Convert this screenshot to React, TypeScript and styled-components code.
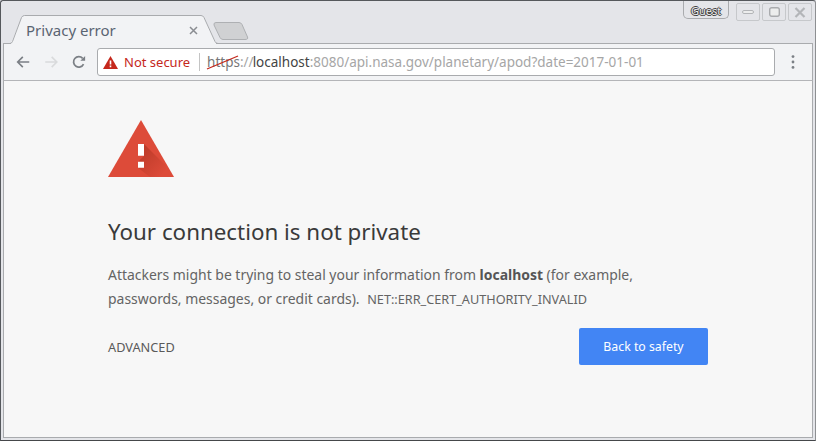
import styled, { createGlobalStyle } from "styled-components";

const uiFont = `"Noto Sans", "Open Sans", sans-serif`;

const GlobalStyle = createGlobalStyle`
  html, body {
    margin: 0;
    padding: 0;
    width: 816px;
    height: 441px;
    overflow: hidden;
    background: #e4e5e9;
  }
  * {
    box-sizing: border-box;
  }
`;

const Window = styled.div`
  width: 816px;
  height: 441px;
  display: flex;
  flex-direction: column;
  background: #e4e5e9;
  border: 1px solid #55585c;
  border-right-color: #8d8f92;
  border-bottom-color: #45474a;
  border-radius: 3px 3px 0 0;
  padding: 0 2px 2px 2px;
  font-family: ${uiFont};
`;

const TitleBar = styled.div`
  height: 42px;
  flex: none;
  display: flex;
  justify-content: space-between;
  align-items: flex-start;
`;

const TabStrip = styled.div`
  display: flex;
  align-items: flex-start;
  padding-top: 14px;
`;

const Tab = styled.div`
  position: relative;
  width: 216px;
  height: 30px;
  padding: 5px 21px 0 23px;
  display: flex;
  justify-content: space-between;
  color: #5a6472;
  font-size: 15px;
  line-height: 20px;
`;

const TabShape = styled.svg`
  position: absolute;
  left: 0;
  top: 0;
`;

const TabTitle = styled.span`
  position: relative;
`;

const TabClose = styled.svg`
  position: relative;
  margin-top: 6px;
`;

const NewTab = styled.svg`
  margin: 7px 0 0 -6px;
`;

const WindowControls = styled.div`
  display: flex;
  align-items: flex-start;
  gap: 2px;
  padding-right: 1px;
`;

const GuestBadge = styled.div`
  width: 46px;
  height: 18px;
  margin-right: 5px;
  border: 1px solid #a9abae;
  border-top: 0;
  border-radius: 0 0 5px 5px;
  text-align: center;
  font-size: 11px;
  line-height: 19px;
  color: #ececec;
  text-shadow: 1px 0 0 #3e3e3e, -1px 0 0 #3e3e3e, 0 1px 0 #3e3e3e, 0 -1px 0 #3e3e3e;
`;

const ControlButton = styled.div`
  width: 24px;
  height: 18px;
  margin-top: 2px;
  border: 1px solid #c6c8cb;
  border-radius: 2px;
  display: flex;
  align-items: center;
  justify-content: center;
`;

const Toolbar = styled.div`
  height: 38px;
  flex: none;
  display: flex;
  align-items: center;
  padding: 0 13px 0 12px;
  background: #f2f3f5;
  border: 1px solid #a9abae;
  border-bottom-color: #b4b5b8;
`;

const NavButtons = styled.div`
  display: flex;
  align-items: center;
  gap: 13.5px;
  width: 81px;
  flex: none;
`;

const AddressBar = styled.div`
  width: 678px;
  height: 28px;
  flex: none;
  display: flex;
  align-items: center;
  padding-left: 5px;
  background: #fff;
  border: 1px solid #a9abae;
  border-radius: 3px;
  font-size: 13.5px;
  white-space: nowrap;
`;

const SecurityChip = styled.div`
  display: flex;
  align-items: center;
  gap: 6px;
  padding-right: 9px;
  color: #c5281c;
  border-right: 1px solid #c4c4c4;
  font-size: 13px;
  line-height: 18px;
`;

const Scheme = styled.span`
  position: relative;
  margin-left: 7px;
  color: #777;
`;

const Strike = styled.svg`
  position: absolute;
  left: -2px;
  top: -1px;
`;

const UrlMuted = styled.span`
  color: #a6a6a6;
`;

const UrlHost = styled.span`
  margin-left: -1px;
  color: #444;
`;

const MenuDots = styled.svg`
  margin-left: 16px;
  flex: none;
`;

const Content = styled.main`
  flex: 1;
  min-height: 0;
  padding: 39px 0 0 104px;
  background: #f7f7f7;
  border: 1px solid #a9abae;
  border-top: 0;
  color: #5a5a5a;
`;

const Panel = styled.div`
  width: 600px;
`;

const WarningIcon = styled.svg`
  display: block;
`;

const Heading = styled.h1`
  margin: 40px 0 0;
  font-size: 22.35px;
  font-weight: 400;
  line-height: 30px;
  color: #3a3a3a;
`;

const Message = styled.p`
  margin: 16px 0 0;
  font-size: 13.95px;
  line-height: 24px;
  color: #646464;

  strong {
    font-weight: 700;
    color: #555;
  }
`;

const ErrorCode = styled.span`
  margin-left: 4px;
  font-size: 12.7px;
`;

const Actions = styled.div`
  margin-top: 17px;
  display: flex;
  align-items: center;
  justify-content: space-between;
`;

const AdvancedLink = styled.span`
  font-size: 12.75px;
  color: #5a5a5a;
`;

const SafetyButton = styled.button`
  width: 129px;
  height: 37px;
  padding: 0;
  border: 0;
  border-radius: 2px;
  background: #4285f4;
  color: #fff;
  font-family: inherit;
  font-size: 12.3px;
`;

export default function App() {
  return (
    <>
      <GlobalStyle />
      <Window>
        <TitleBar>
          <TabStrip>
            <Tab>
              <TabShape width="216" height="30" viewBox="0 0 216 30">
                <path d="M8 28 L19 2 Q20 .5 22 .5 H198 Q200 .5 201 2 L213 28 V30 H8 Z" fill="#f2f3f5" />
                <path
                  d="M0 28.5 H7 Q8.5 28.5 9.5 26.5 L18.5 2.5 Q19.5 .5 21.5 .5 H198 Q200 .5 201 2.5 L212 26.5 Q213 28.5 215 28.5"
                  fill="none"
                  stroke="#a9abae"
                />
              </TabShape>
              <TabTitle>Privacy error</TabTitle>
              <TabClose width="9" height="9" viewBox="0 0 9 9">
                <path d="M1 1 L8 8 M8 1 L1 8" stroke="#8a8d92" strokeWidth="1.5" />
              </TabClose>
            </Tab>
            <NewTab width="36" height="20" viewBox="0 0 36 20">
              <path
                d="M3 .5 H26 Q28 .5 29 2.5 L34.5 15 Q35.5 17.5 32 17.5 H10 Q8 17.5 7 15.5 L1 3 Q.5 .5 3 .5 Z"
                fill="#d0d1d3"
                stroke="#aeb0b3"
              />
            </NewTab>
          </TabStrip>
          <WindowControls>
            <GuestBadge>Guest</GuestBadge>
            <ControlButton>
              <svg width="12" height="4" viewBox="0 0 12 4">
                <rect x=".5" y=".5" width="11" height="3" rx="1.5" fill="#eceded" stroke="#b3b5b8" />
              </svg>
            </ControlButton>
            <ControlButton>
              <svg width="11" height="10" viewBox="0 0 11 10">
                <rect x=".7" y=".7" width="9.6" height="8.6" rx="2" fill="#eceded" stroke="#a9abae" strokeWidth="1.4" />
              </svg>
            </ControlButton>
            <ControlButton>
              <svg width="12" height="11" viewBox="0 0 12 11">
                <path d="M1.5 1 L10.5 10 M10.5 1 L1.5 10" stroke="#b3b5b8" strokeWidth="2.2" />
              </svg>
            </ControlButton>
          </WindowControls>
        </TitleBar>
        <Toolbar>
          <NavButtons>
            <svg width="14.5" height="12" viewBox="0 0 16 14">
              <path d="M15 7 H2 M7.5 1 L1.5 7 L7.5 13" fill="none" stroke="#7b7f85" strokeWidth="1.9" />
            </svg>
            <svg width="14.5" height="12" viewBox="0 0 16 14">
              <path d="M1 7 H14 M8.5 1 L14.5 7 L8.5 13" fill="none" stroke="#d9dadc" strokeWidth="1.9" />
            </svg>
            <svg width="14" height="14" viewBox="0 0 16 16">
              <path d="M13.2 10.5 A6 6 0 1 1 12.2 3.8" fill="none" stroke="#7b7f85" strokeWidth="2" />
              <path d="M9.5 6.5 H15 V1 Z" fill="#7b7f85" />
            </svg>
          </NavButtons>
          <AddressBar>
            <SecurityChip>
              <svg width="15" height="13" viewBox="0 0 15 13">
                <path d="M7.5 0 L15 13 H0 Z" fill="#c5281c" />
                <path d="M6.7 4.4 H8.3 V8.6 H6.7 Z M6.7 9.6 H8.3 V11.2 H6.7 Z" fill="#fff" />
              </svg>
              Not secure
            </SecurityChip>
            <Scheme>
              https
              <Strike width="34" height="20" viewBox="0 0 34 20">
                <path d="M2 17 L33 4" stroke="#c5281c" strokeWidth="1.3" />
              </Strike>
            </Scheme>
            <UrlMuted>://</UrlMuted>
            <UrlHost>localhost</UrlHost>
            <UrlMuted>:8080/api.nasa.gov/planetary/apod?date=2017-01-01</UrlMuted>
          </AddressBar>
          <MenuDots width="4" height="14" viewBox="0 0 4 14">
            <circle cx="2" cy="1.6" r="1.4" fill="#7b7f85" />
            <circle cx="2" cy="7" r="1.4" fill="#7b7f85" />
            <circle cx="2" cy="12.4" r="1.4" fill="#7b7f85" />
          </MenuDots>
        </Toolbar>
        <Content>
          <Panel>
            <WarningIcon width="66" height="57" viewBox="0 0 66 57">
              <defs>
                <linearGradient id="bangShadow" x1="0.2" y1="0.1" x2="0.9" y2="0.9">
                  <stop offset="0" stopColor="#a8301f" stopOpacity=".6" />
                  <stop offset="1" stopColor="#a8301f" stopOpacity="0" />
                </linearGradient>
              </defs>
              <path d="M33 0 L66 57 H0 Z" fill="#dd4b39" />
              <path d="M36 24 L58 46 L58 57 H42 L30 47.7 V41.7 L36 36 Z" fill="url(#bangShadow)" />
              <path d="M30 24 H36 V35.7 H30 Z M30 41.7 H36 V47.7 H30 Z" fill="#fff" />
            </WarningIcon>
            <Heading>Your connection is not private</Heading>
            <Message>
              Attackers might be trying to steal your information from <strong>localhost</strong> (for example,
              <br />
              passwords, messages, or credit cards). <ErrorCode>NET::ERR_CERT_AUTHORITY_INVALID</ErrorCode>
            </Message>
            <Actions>
              <AdvancedLink>ADVANCED</AdvancedLink>
              <SafetyButton>Back to safety</SafetyButton>
            </Actions>
          </Panel>
        </Content>
      </Window>
    </>
  );
}
